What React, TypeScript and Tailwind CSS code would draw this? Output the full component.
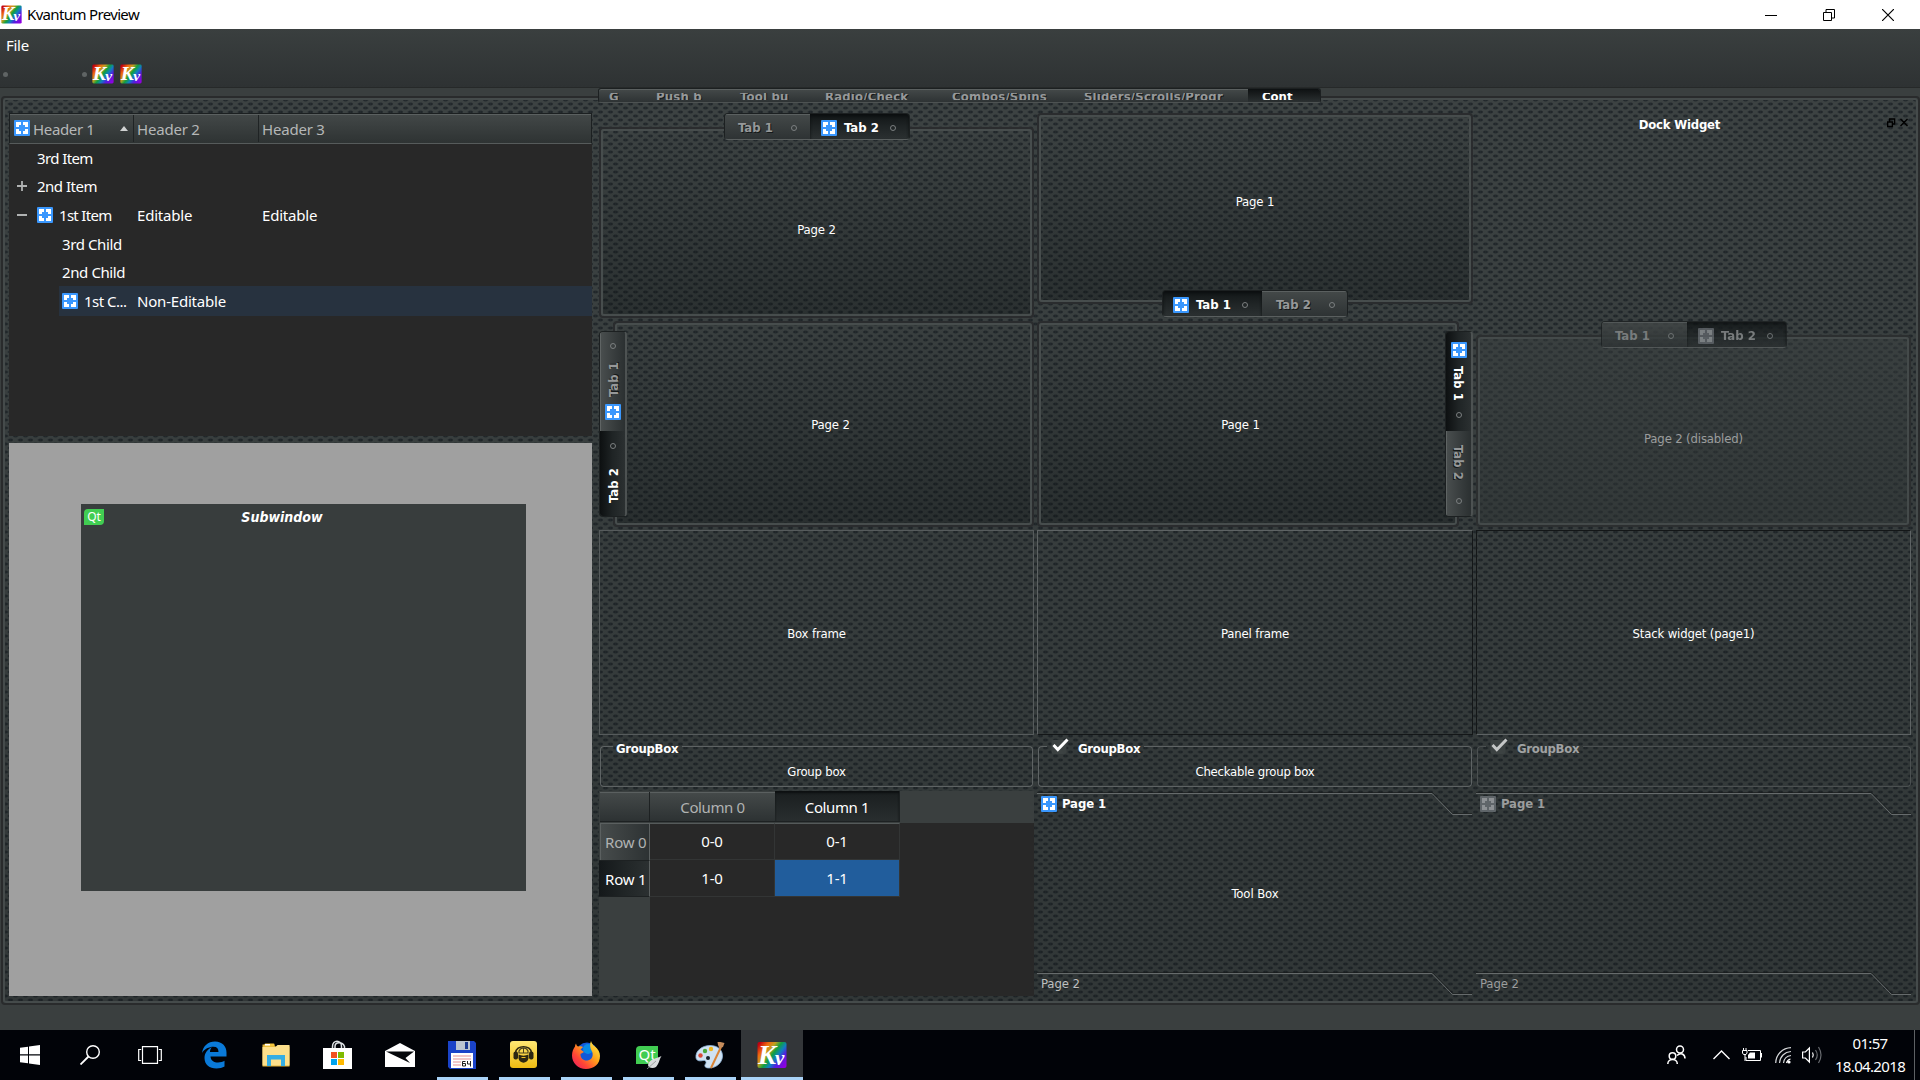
import React from "react";

const WEAVE =
  "bg-[radial-gradient(ellipse_3.4px_1.9px_at_2.5px_2px,#20262880_0,#20262a_45%,transparent_100%),radial-gradient(ellipse_3.4px_1.9px_at_7.5px_6px,#20262880_0,#20262a_45%,transparent_100%)] bg-[size:10px_8px]";

const SEGOE = "font-['Noto_Sans',sans-serif]";
const TAHOMA = "font-['DejaVu_Sans_Condensed','DejaVu_Sans',sans-serif]";

function KvLogo({ size, id }: { size: number; id: string }) {
  return (
    <svg width={size} height={size} viewBox="0 0 30 30" className="shrink-0">
      <defs>
        <linearGradient id={id} x1="0" y1="0.15" x2="1" y2="0.85">
          <stop offset="0" stopColor="#c00010" />
          <stop offset="0.2" stopColor="#f06a10" />
          <stop offset="0.36" stopColor="#c0a020" />
          <stop offset="0.5" stopColor="#10a040" />
          <stop offset="0.64" stopColor="#1080c0" />
          <stop offset="0.78" stopColor="#5020e0" />
          <stop offset="1" stopColor="#9000e0" />
        </linearGradient>
      </defs>
      <rect x="0.5" y="2" width="29" height="26" rx="2" fill={`url(#${id})`} />
      <text x="1" y="23.5" fontFamily="Liberation Serif, serif" fontStyle="italic" fontWeight="bold" fontSize="27" fill="#fff">
        K
      </text>
      <text x="18" y="24.5" fontFamily="Liberation Serif, serif" fontStyle="italic" fontWeight="bold" fontSize="21" fill="#fff">
        v
      </text>
    </svg>
  );
}

function FullIcon({ muted = false }: { muted?: boolean }) {
  return (
    <svg width="16" height="16" viewBox="0 0 16 16" className="shrink-0">
      <rect width="16" height="16" rx="1" fill={muted ? "#5f6569" : "#3a97fd"} />
      <path
        d="M2 2h5v3H5v2H2zM14 2v5h-3V5H9V2zM2 14V9h3v2h2v3zM14 14H9v-3h2V9h3z"
        fill={muted ? "#8d9194" : "#fff"}
      />
    </svg>
  );
}

function Ring() {
  return <span className="size-[6px] shrink-0 rounded-full border-[1.5px] border-[#7b7f80]" />;
}

function Frame({ className = "", children, dim = false }: { className?: string; children?: React.ReactNode; dim?: boolean }) {
  return (
    <div className={`rounded-[4px] border-2 ${dim ? "border-[#2c2f30]" : "border-[#2a2c2e]"} ${className}`}>
      <div
        className={`flex h-full items-center justify-center rounded-[3px] border-2 tracking-[-0.15px] ${
          dim
            ? "border-[#444a4a] bg-linear-to-b from-[#3a404070] to-[#2e343480] text-[#9b9d9d]"
            : "border-[#474d4d] bg-linear-to-b from-transparent to-[#0a0f1050] text-white"
        }`}
      >
        {children}
      </div>
    </div>
  );
}

function HTab({ label, active, icon, muted, className }: { label: string; active?: boolean; icon?: boolean; muted?: boolean; className: string }) {
  const face = active
    ? "bg-linear-to-b from-[#111516] via-[#1f2425] to-[#2b3031] shadow-[inset_0_2px_3px_#0c0f10]"
    : "bg-linear-to-b from-[#444949] to-[#2e3334] shadow-[inset_0_1px_0_#5b6060]";
  const ink = muted ? "text-[#8a8d8e]" : active ? "text-white" : "text-[#969899] [text-shadow:1px_1px_0_#15191a]";
  return (
    <div className={`flex items-center pt-[2px] text-[13px] font-bold ${face} ${ink} ${className}`}>
      {icon && (
        <span className="mr-[7px] flex">
          <FullIcon muted={muted} />
        </span>
      )}
      <span className="mr-[18px] w-[35px] whitespace-nowrap">{label}</span>
      <Ring />
    </div>
  );
}

function HTabs({ first, muted, className = "" }: { first: boolean; muted?: boolean; className?: string }) {
  return (
    <div
      className={`relative z-10 flex h-[27px] w-[186px] overflow-hidden rounded-[4px] border border-[#1c2021] border-b-[#5a5f5f] ${muted ? "opacity-80" : ""} ${className}`}
    >
      <HTab label="Tab 1" active={first} icon={first} muted={muted} className={first ? "w-[99px] pl-[10px] [&>span]:mr-[7px]! [&>span:nth-child(2)]:mr-[11px]!" : "w-[85px] pl-[13px]"} />
      <HTab label="Tab 2" active={!first} icon={!first} muted={muted} className={first ? "flex-1 pl-[14px]" : "flex-1 pl-[11px] [&>span]:mr-[7px]! [&>span:nth-child(2)]:mr-[11px]!"} />
    </div>
  );
}

function VTab({ label, active }: { label: string; active?: boolean }) {
  return (
    <span
      className={`text-[13px] leading-[16px] font-bold whitespace-nowrap [writing-mode:vertical-rl] ${
        active ? "text-white" : "text-[#969899] [text-shadow:1px_1px_0_#15191a]"
      }`}
    >
      {label}
    </span>
  );
}

const vActive = "bg-linear-to-r from-[#0d1011] via-[#1f2425] to-[#2b3031]";
const vIdle = "bg-linear-to-r from-[#4a4f4f] to-[#2b3031] shadow-[inset_1px_0_0_#5f6464]";
const vStrip =
  "relative z-10 flex h-[186px] w-[28px] flex-col overflow-hidden rounded-[4px] border border-[#1c2021] border-r-2 border-r-[#4d5252]";

const outerTabs: [string, number][] = [
  ["G", 47],
  ["Push b", 84],
  ["Tool bu", 85],
  ["Radio/Check", 127],
  ["Combos/Spins", 132],
  ["Sliders/Scrolls/Progr", 164],
];

function Check({ muted }: { muted?: boolean }) {
  return (
    <svg width="18" height="18" viewBox="0 0 18 18" className="shrink-0">
      <rect x="0.5" y="3" width="15" height="14" rx="2" fill="#3c4242" />
      <path d="M2.5 8l4.3 4.500L16.500 2.500" fill="none" stroke={muted ? "#c5c7c7" : "#fff"} strokeWidth="3" />
    </svg>
  );
}

function Group({ title, label, check, muted }: { title: string; label?: string; check?: boolean; muted?: boolean }) {
  const line = muted ? "border-[#4b5051]" : "border-[#5e6364]";
  return (
    <div className={`px-px pt-[2px] pb-px ${muted ? "text-[#a0a2a2]" : "text-white"}`}>
      <div className="flex h-[15px] items-start text-[13px] leading-[15px] font-bold">
        <div className={`mt-[6px] h-[9px] rounded-tl-[4px] border-t border-l ${line} ${check ? "w-[9px]" : "w-[13px]"}`} />
        {check && (
          <span className="mt-[-3px] ml-[4px] flex">
            <Check muted={muted} />
          </span>
        )}
        <span className={`w-[62px] pt-px tracking-[-0.3px] whitespace-nowrap ${check ? "ml-[9px]" : "ml-[3px]"}`}>{title}</span>
        <div className={`mt-[6px] ml-[4px] h-[9px] flex-1 rounded-tr-[4px] border-t border-r ${line}`} />
      </div>
      <div
        className={`flex h-[32px] items-start justify-center rounded-b-[4px] border border-t-0 pt-[9px] text-[13px] leading-[16px] tracking-[-0.22px] ${line}`}
      >
        {label}
      </div>
    </div>
  );
}

function Notch() {
  return (
    <svg width="435" height="23" viewBox="0 0 435 23" className="absolute inset-x-0 top-0">
      <path d="M0 .5H395.500L416 21.500H435" fill="none" stroke="#171a1b" strokeOpacity=".6" strokeWidth="1" />
      <path d="M0 1.500H395L415.500 22.500H435" fill="none" stroke="#666b6c" strokeWidth="1" />
    </svg>
  );
}

function ToolBox({ muted, label }: { muted?: boolean; label?: string }) {
  return (
    <div className={`flex flex-col text-[13px] tracking-[-0.1px] ${muted ? "text-[#9b9d9d]" : "text-white"}`}>
      <div className="relative mt-[1px] flex h-[24px] items-center pl-[4px] font-bold">
        <Notch />
        <span className="mb-px flex"><FullIcon muted={muted} /></span>
        <span className="ml-[5px]">Page 1</span>
      </div>
      <div className="flex h-[156px] items-center justify-center">{label}</div>
      <div className={`relative flex h-[23px] items-center pt-px pl-[4px] ${muted ? "" : "text-[#bdbfbf]"}`}>
        <Notch />
        Page 2
      </div>
    </div>
  );
}

function TreeRow({ children, className = "" }: { children: React.ReactNode; className?: string }) {
  return <div className={`flex items-center ${className}`}>{children}</div>;
}

function Tree() {
  return (
    <div className="h-[323px] bg-[#282828] text-[15px] tracking-[-0.2px] text-white">
      <div className="flex h-[31px] items-center border border-t-[#1c2021] border-r-[#1c2021] border-b-[#565b5b] border-l-[#1c2021] bg-linear-to-b from-[#434848] to-[#2e3333] text-[#b5b7b7] shadow-[inset_0_1px_0_#5b6060]">
        <div className="flex h-[27px] w-[124px] items-center border-r border-[#1f2324] pl-[4px]">
          <span className="mb-px flex"><FullIcon /></span>
          <span className="ml-[3px] w-[87px] pt-[2px] tracking-[-0.35px]">Header 1</span>
          <span className="border-x-[4px] border-b-[5px] border-x-transparent border-b-[#d0d2d2]" />
        </div>
        <div className="flex h-[27px] w-[125px] items-center border-r border-[#1f2324] pt-[2px] pl-[3px]">Header 2</div>
        <div className="pt-[2px] pl-[3px]">Header 3</div>
      </div>
      <TreeRow className="h-[28px] pl-[28px] tracking-[-0.6px]">3rd Item</TreeRow>
      <TreeRow className="h-[28px] pl-[8px] tracking-[-0.5px]">
        <svg width="10" height="10" className="mr-[10px]"><path d="M0 5h10M5 0v10" stroke="#b0b2b2" strokeWidth="1.800" /></svg>
        2nd Item
      </TreeRow>
      <TreeRow className="h-[30px] pl-[8px]">
        <svg width="10" height="10" className="mr-[10px]"><path d="M0 5h10" stroke="#b0b2b2" strokeWidth="2" /></svg>
        <FullIcon />
        <span className="ml-[6px] w-[78px] tracking-[-0.7px]">1st Item</span>
        <span className="w-[125px]">Editable</span>
        <span>Editable</span>
      </TreeRow>
      <TreeRow className="h-[28px] pl-[53px] tracking-[-0.4px]">3rd Child</TreeRow>
      <TreeRow className="h-[28px] pl-[53px] tracking-[-0.4px]">2nd Child</TreeRow>
      <TreeRow className="ml-[50px] h-[30px] bg-[#27323f] pl-[3px]">
        <FullIcon />
        <span className="ml-[6px] w-[53px] tracking-[-0.5px]">1st C...</span>
        <span>Non-Editable</span>
      </TreeRow>
    </div>
  );
}

function QtBadge({ className = "" }: { className?: string }) {
  return (
    <span className={`flex h-[16px] w-[20px] items-center justify-center rounded-tl-[4px] rounded-br-[4px] bg-[#41cd52] text-[12px] leading-none text-white ${className}`}>
      Qt
    </span>
  );
}

function Table() {
  const headIdle = "bg-linear-to-b from-[#454a4a] to-[#2d3233] shadow-[inset_0_1px_0_#5b6060] border-[#1d2122]";
  return (
    <div className="grid grid-cols-[51px_125px_125px_1fr] grid-rows-[32px_37px_37px_1fr] bg-[#3a3f3f] text-[15px] tracking-[-0.2px] text-white">
      <div className={`mt-[1px] mb-[1px] ml-[1px] border-r border-b ${headIdle}`} />
      <div className={`mt-[1px] mb-[1px] flex items-center justify-center border-b pt-[2px] tracking-[-0.4px] text-[#b0b2b2] ${headIdle}`}>Column 0</div>
      <div className="mt-0 mb-[1px] flex items-center justify-center border-r border-b border-[#1d2122] bg-linear-to-b from-[#1a1e1f] to-[#292e2f] pt-[3px] tracking-[-0.4px] shadow-[inset_0_2px_2px_#0d1011]">Column 1</div>
      <div />
      <div className="ml-[1px] flex items-center border-r border-[#5b6060] bg-linear-to-r from-[#474c4c] to-[#2d3233] pt-[1px] pl-[5px] whitespace-nowrap text-[#b0b2b2] shadow-[inset_1px_1px_0_#5b6060]">Row 0</div>
      <div className="flex items-center justify-center border-r border-b border-[#333535] border-t border-t-[#555a5a] bg-[#282828]">0-0</div>
      <div className="flex items-center justify-center border-r border-b border-[#333535] border-t border-t-[#555a5a] bg-[#282828]">0-1</div>
      <div className="bg-[#282828]" />
      <div className="flex items-center border-t border-r border-b border-t-[#1d2122] border-r-[#5b6060] border-b-[#1d2122] bg-linear-to-r from-[#14181a] via-[#202526] to-[#2b3031] pt-[1px] pl-[6px] whitespace-nowrap">Row 1</div>
      <div className="flex items-center justify-center border-r border-b border-[#333535] bg-[#282828]">1-0</div>
      <div className="flex items-center justify-center border-r border-b border-[#333535] bg-[#215d9c]">1-1</div>
      <div className="bg-[#282828]" />
      <div />
      <div className="col-span-3 bg-[#282828]" />
    </div>
  );
}

function Slot({ children, open, active }: { children: React.ReactNode; open?: boolean; active?: boolean }) {
  return (
    <div className={`flex h-full w-[62px] flex-col items-center ${active ? "bg-[#333639]" : ""}`}>
      <div className="flex flex-1 items-center pt-[2px]">{children}</div>
      <div className={`h-[3px] ${active ? "w-full" : "w-[51px]"} ${open ? "bg-[#a9d3f7]" : ""}`} />
    </div>
  );
}

function Taskbar() {
  return (
    <div className="flex h-[50px] items-center bg-[#010308] text-white">
      <div className="flex w-[60px] justify-center">
        <svg width="20" height="20" viewBox="0 0 20 20" fill="#fff"><path d="M0 2.800L8 1.700V9.300H0zM9 1.500L20 0V9.300H9zM0 10.500H8V18.300L0 17.200zM9 10.500H20V20L9 18.500z" /></svg>
      </div>
      <div className="flex w-[60px] justify-center">
        <svg width="20" height="20" viewBox="0 0 20 20" fill="none" stroke="#fff" strokeWidth="1.400"><circle cx="13" cy="7" r="6.300" /><path d="M8.500 11.500L.5 19.500" strokeWidth="1.800" /></svg>
      </div>
      <div className="flex w-[60px] justify-center">
        <svg width="24" height="18" viewBox="0 0 24 18" fill="none" stroke="#fff" strokeWidth="1.200"><path d="M4.500.6h15v16.800h-15zM3.200 3.500H.7v11h2.500M20.800 3.500h2.500v11h-2.500" /></svg>
      </div>
      <div className="ml-[3px] flex h-full">
        <Slot>
          <svg width="26" height="28" viewBox="0 0 26 28">
            <path d="M1 12C2 5 7 0.500 14 0.500c7.500 0 11.500 5 11.500 11v4H9.500c.3 4 3.500 6 7.500 6 2.500 0 4.800-.7 6.500-1.700v5.700c-2 1.300-5 2-8 2C8.500 27.500 3.500 23.500 3.500 17c0-5 3-8.800 7.500-10.800C9.500 7.500 9 9.500 9 11h8.500c0-3.500-1.700-5.200-5-5.200C8 5.800 3.500 8 1 12z" fill="#0a7ad8" />
          </svg>
        </Slot>
        <Slot>
          <svg width="28" height="26" viewBox="0 0 28 26">
            <path d="M.5 2.500h11l2 2H27.500v20H.5z" fill="#e3b63a" /><path d="M.5 5h13l2-2h12v20.500H.5z" fill="#fde08c" /><rect x="2.500" y="1.500" width="10" height="3" rx="1" fill="#f4c63d" /><rect x="3" y="2" width="5" height="1.500" fill="#fff" />
            <path d="M5 13h18v11h-4v-6.500H9V24H5z" fill="#35aee4" />
          </svg>
        </Slot>
        <Slot>
          <svg width="29" height="29" viewBox="0 0 29 29" className="mr-[2px]">
            <path d="M9.500 9V6.500c0-7 9-7 9 0V9M12 9V6.500c0-5 7.500-5 9.500 0V9" fill="none" stroke="#dfe3e6" strokeWidth="1.500" /><path d="M0 8h29v21H0z" fill="#fff" />
            <path d="M8 12h6v6H8z" fill="#f25022" /><path d="M15 12h6v6h-6z" fill="#7fba00" /><path d="M8 19h6v6H8z" fill="#00a4ef" /><path d="M15 19h6v6h-6z" fill="#ffb900" />
          </svg>
        </Slot>
        <Slot>
          <svg width="30" height="24" viewBox="0 0 30 24"><path d="M0 8L15 0l15 8v16H0z" fill="#fff" /><path d="M1 8.500h28l-8.500 6.500 4.500 5L1 8.500z" fill="#05070b" /></svg>
        </Slot>
        <Slot open>
          <svg width="28" height="28" viewBox="0 0 28 28">
            <path d="M0 0h26l2 2v26H2l-2-2z" fill="#1a43c8" /><rect x="8" y="0" width="14" height="9" fill="#b9c4d0" /><rect x="17" y="1" width="3" height="7" fill="#1a3a90" /><rect x="3" y="12" width="22" height="15" fill="#fff" />
            <path d="M5 15h18M5 18h18M5 21h8M5 24h8" stroke="#f0b5b8" strokeWidth="1.500" /><path d="M17.500 20.500h-3v4.500h3v-2.500h-3M19.500 20v3h3M22.500 20v5.500" fill="none" stroke="#222" strokeWidth="1" />
          </svg>
        </Slot>
        <Slot open>
          <svg width="27" height="27" viewBox="0 0 27 27" className="mr-[1px]">
            <defs><linearGradient id="hp" x1="0" y1="0" x2="0" y2="1"><stop offset="0" stopColor="#ffe874" /><stop offset="1" stopColor="#eebb12" /></linearGradient></defs>
            <rect width="27" height="27" rx="3" fill="url(#hp)" />
            <path d="M5.500 12C6 3.500 21 3.500 21.500 12" fill="none" stroke="#2c2712" strokeWidth="1.500" />
            <path d="M9 10c1.500-4 7.500-4 9 0v2H9z" fill="none" stroke="#4a421f" strokeWidth="1.200" /><path d="M13.500 7v5" stroke="#4a421f" />
            <rect x="3.500" y="10.500" width="4.500" height="8" rx="2" fill="#2c2712" /><rect x="19" y="10.500" width="4.500" height="8" rx="2" fill="#2c2712" />
            <path d="M8.500 13.500c3 1.500 7 1.500 10 0v4c-1 5.500-9 5.500-10 0z" fill="#2c2712" /><path d="M11.500 16.500h4" stroke="#f0c020" strokeWidth="1" />
          </svg>
        </Slot>
        <Slot open>
          <svg width="28" height="28" viewBox="0 0 28 28">
            <defs><linearGradient id="ff" x1="1" y1="0" x2="0" y2="1"><stop offset="0.050" stopColor="#fff14a" /><stop offset="0.400" stopColor="#ffa51a" /><stop offset="0.700" stopColor="#ff4436" /><stop offset="1" stopColor="#e4166a" /></linearGradient></defs>
            <circle cx="15" cy="12" r="10.500" fill="#1358d8" /><circle cx="16" cy="8" r="5" fill="#00b8f0" opacity=".55" />
            <path d="M19 0c1 3 2 4 4 5.500C26 8 28 11 28 15c0 8-6 13-14 13S0 22 0 14.500c0-4 1.500-7 3-9 0-1 .3-2 1-3 .3 1.500 1 2.500 2 3 2-.6 4-.2 5 .6L8.500 8.500 12 11l-3.500 2c-.3 4 3 7 7 6.500 5-.5 6.500-6 4-10C18 7 17.500 3 19 0z" fill="url(#ff)" />
          </svg>
        </Slot>
        <Slot open>
          <div className="relative mr-[2px] flex">
            <QtBadge className="h-[18px]! w-[22px]! text-[15px]!" />
            <svg width="15" height="13" viewBox="0 0 15 13" className="absolute top-[10px] left-[11px]"><path d="M14.500 0C9 3 2 3 1 9c0 3 5 4 8 2 3-3 3-7 5.500-11z" fill="#d9dcdd" /><path d="M0 13L9 5" stroke="#8c9193" strokeWidth=".8" /></svg>
          </div>
        </Slot>
        <Slot open>
          <svg width="30" height="28" viewBox="0 0 30 28">
            <path d="M1 17C0 10 7 4.500 15 4.500S27.500 9 27.500 15 22 27 14 27c-4 0-5-2-3.500-4s0-4-2.500-3.500-6 1-7-2.500z" fill="#cfe2f3" stroke="#8db3d6" strokeWidth=".8" />
            <circle cx="5.500" cy="14.500" r="2.200" fill="#d94a38" /><circle cx="10" cy="10" r="2.200" fill="#4aa83c" /><circle cx="16" cy="8" r="2.200" fill="#f0b51c" /><circle cx="13" cy="17" r="2" fill="#16202c" />
            <path d="M26 6L16 27" stroke="#d98436" strokeWidth="2" /><path d="M22.500 1l3 0L29.500 2l-1.500 4-3.500 1.500L23 4z" fill="#c58c5c" />
          </svg>
        </Slot>
        <Slot open active>
          <KvLogo size={30} id="kvTask" />
        </Slot>
      </div>
      <div className="ml-auto flex h-full items-center">
        <svg width="19" height="20" viewBox="0 0 19 20" className="mr-[27px]" fill="none" stroke="#fff" strokeWidth="1.500"><circle cx="13" cy="4.500" r="3.500" /><circle cx="5.500" cy="11" r="3.300" /><path d="M.8 19c0-6 9.500-6 9.500 0M10 10.500c3.500-3.500 8-1.500 8 3" /></svg>
        <svg width="17" height="10" viewBox="0 0 17 10" className="mr-[12px]" fill="none" stroke="#fff" strokeWidth="1.400"><path d="M.5 9L8.500 1l8 8" /></svg>
        <svg width="20" height="14" viewBox="0 0 20 14" className="mr-[13px]" fill="none" stroke="#fff"><path d="M6 2.500h12.500v10H4V9" /><path d="M19.500 5v4.500" /><path d="M8 4.500h5v6H6V7z" fill="#fff" stroke="none" /><path d="M1.500 0v2M4 0v2" /><path d="M.5 2.500h4.500v2.500l-1 1.500H1.500l-1-1.500zM3 6.500V13" /></svg>
        <svg width="17" height="17" viewBox="0 0 17 17" className="mr-[10px]" fill="none" stroke="#d4d6d8" strokeWidth="1.200"><path d="M.7 16C1 7.500 7.500 1 16 .7M4.500 16C5 9.500 9.500 5 16 4.500M8.500 16c.5-4.500 3-7 7.500-7.500" /><path d="M11.500 16c.5-2 1.500-3.500 4-4" stroke="#fff" /><circle cx="14" cy="15" r="1.600" fill="#fff" stroke="none" /></svg>
        <svg width="21" height="18" viewBox="0 0 21 18" className="mr-[11px]" fill="none" stroke="#fff" strokeWidth="1.200"><path d="M.6 6h2.800l4-4v14l-4-4H.6z" /><path d="M10.500 6.500q1.500 2.500 0 5" /><path d="M13.500 4q3.500 5 0 10M16.500 1q5 8 0 16" stroke="#686b6f" /></svg>
        <div className="flex w-[72px] flex-col items-center text-[15px] leading-[23px] tracking-[-0.65px] whitespace-nowrap">
          <span>01:57</span>
          <span>18.04.2018</span>
        </div>
        <div className="ml-[8px] h-full w-px bg-[#5d6063]" />
        <div className="w-[5px]" />
      </div>
    </div>
  );
}

export default function App() {
  return (
    <div className={`flex h-[1080px] w-[1920px] flex-col overflow-hidden bg-[#3a3f3f] ${SEGOE}`}>
      <header className="flex h-[29px] shrink-0 items-center bg-white pl-[1px] text-[15px] text-black">
        <KvLogo size={21} id="kvTitle" />
        <span className="ml-[5px] tracking-[-0.65px]">Kvantum Preview</span>
        <div className="ml-auto flex items-center">
          <svg width="12" height="12" className="mr-[46px]"><path d="M0 6.500h12" stroke="#000" /></svg>
          <svg width="12" height="12" className="mr-[47px]" fill="none" stroke="#000"><path d="M.5 3.500h8v8h-8zM3 3V.5h8.500V9H9" /></svg>
          <svg width="12" height="12" className="mr-[26px]" stroke="#000" strokeWidth="1.200"><path d="M0 0L12 12M12 0L0 12" /></svg>
        </div>
      </header>

      <div className="flex h-[59px] shrink-0 flex-col border-b border-[#262929] bg-linear-to-b from-[#3a3f3f] to-[#2e3233] text-[15px] text-white">
        <div className="flex h-[33px] items-center pl-[6px] tracking-[-0.3px]">File</div>
        <div className="flex h-[24px] items-center pl-[3px]">
          <span className="size-[5px] rounded-full bg-[#5f6464]" />
          <span className="ml-[74px] size-[5px] rounded-full bg-[#5f6464]" />
          <span className="ml-[5px] flex gap-[6px]">
            <KvLogo size={22} id="kvBarA" />
            <KvLogo size={22} id="kvBarB" />
          </span>
        </div>
      </div>

      <div className={`mt-[8px] ml-[1px] h-[909px] shrink-0 rounded-[4px] border-2 border-[#292b2c] bg-[#3c4242] ${WEAVE}`}>
        <div className="h-full rounded-[3px] bg-linear-to-b from-transparent to-[#0a0f1038] shadow-[inset_0_0_0_2px_#454b4b]">
          <div className={`absolute top-[88px] left-[598px] z-10 flex h-[15px] w-[723px] overflow-hidden rounded-[3px] border border-[#1c2021] border-b-[#4d5252] bg-linear-to-b from-[#444949] to-[#2e3334] text-[13px] font-bold text-[#969899] shadow-[inset_0_1px_0_#5b6060] ${TAHOMA}`}>
            <div className="mt-[4px] flex h-[7px] w-[649px] items-center overflow-hidden pl-[10px] tracking-[0.2px] [text-shadow:1px_1px_0_#15191a]">
              {outerTabs.map(([label, w]) => (
                <span key={label} className="shrink-0 leading-[7px] whitespace-nowrap" style={{ width: w }}>
                  {label}
                </span>
              ))}
            </div>
            <div className="flex flex-1 bg-linear-to-b from-[#0e1112] to-[#2b3031] pt-[4px] pl-[14px] text-white">
              <span className="h-[7px] overflow-hidden leading-[7px]">Cont</span>
            </div>
          </div>

          <div className="flex pt-[15px] pl-[6px]">
            <div className="mr-[7px] flex w-[583px] flex-col">
              <Tree />
              <div className="mt-[7px] flex h-[553px] bg-[#a0a0a0]">
                <div className="mt-[61px] ml-[72px] h-[387px] w-[445px] bg-[#383d3d]">
                  <div className="flex h-[25px] items-center pl-[3px]">
                    <QtBadge />
                    <span className={`flex-1 pt-px pr-[66px] text-center text-[14px] font-bold text-white italic ${TAHOMA}`}>Subwindow</span>
                  </div>
                </div>
              </div>
            </div>

            <div className={`grid grid-cols-[435px_436px_436px] grid-rows-[205px_206px_205px_50px_205px] gap-[3px] text-[13px] ${TAHOMA}`}>
              <div className="flex flex-col">
                <HTabs first={false} className="ml-[125px]" />
                <Frame className="mt-[-13px] flex-1"><span className="mt-[14px]">Page 2</span></Frame>
              </div>
              <div className="flex flex-col">
                <Frame className="h-[191px]"><span className="mb-[14px]">Page 1</span></Frame>
                <HTabs first className="mt-[-14px] ml-[125px]" />
              </div>
              <div className="flex items-start text-white">
                <div className="w-[407px] pt-[2px] text-center font-bold tracking-[-0.2px]">Dock Widget</div>
                <svg width="22" height="10" viewBox="0 0 22 10" className="mt-[5px] ml-[4px]" fill="none" stroke="#000" strokeWidth="1.400"><path d="M.6 4h4.800v4.500H.6zM2.600 3.500V1h5v5H6M13.500 1l7 7M20.500 1l-7 7" /></svg>
              </div>

              <div className="flex">
                <div className={`mt-[10px] ${vStrip}`}>
                  <div className={`flex h-[99px] flex-col items-center pt-[11px] ${vIdle}`}>
                    <Ring />
                    <span className="mt-[12px] ml-[2px] flex h-[38px] rotate-180 items-center"><VTab label="Tab 1" /></span>
                    <span className="mt-[5px] ml-px"><FullIcon /></span>
                  </div>
                  <div className={`flex flex-1 flex-col items-center pt-[12px] ${vActive}`}>
                    <Ring />
                    <span className="mt-[18px] ml-[2px] flex h-[38px] rotate-180 items-center"><VTab label="Tab 2" active /></span>
                  </div>
                </div>
                <Frame className="ml-[-14px] flex-1"><span className="mt-px ml-[14px]">Page 2</span></Frame>
              </div>
              <div className="flex">
                <Frame className="w-[422px]"><span className="mt-px mr-[15px]">Page 1</span></Frame>
                <div className={`mt-[10px] ml-[-14px] ${vStrip}`}>
                  <div className={`flex h-[99px] flex-col items-center pt-[10px] ${vActive}`}>
                    <FullIcon />
                    <span className="mt-[8px] mr-[2px] flex h-[36px]"><VTab label="Tab 1" active /></span>
                    <span className="mt-[10px] flex"><Ring /></span>
                  </div>
                  <div className={`flex flex-1 flex-col items-center pt-[14px] ${vIdle}`}>
                    <span className="mr-[2px] flex h-[36px]"><VTab label="Tab 2" /></span>
                    <span className="mt-[17px] flex"><Ring /></span>
                  </div>
                </div>
              </div>
              <div className="flex flex-col">
                <HTabs first={false} muted className="ml-[125px]" />
                <Frame dim className="mt-[-13px] mr-px flex-1"><span className="mt-[15px]">Page 2 (disabled)</span></Frame>
              </div>

              <div className="flex items-center justify-center border border-[#565b5c] pt-[2px] tracking-[-0.15px] text-white">Box frame</div>
              <div className="flex items-center justify-center border border-t-[#5e6364] border-r-[#141718] border-b-[#141718] border-l-[#5e6364] pt-[2px] tracking-[-0.15px] text-white">Panel frame</div>
              <div className="mr-px flex items-center justify-center border border-t-[#141718] border-r-[#5e6364] border-b-[#5e6364] border-l-[#141718] pt-[2px] tracking-[-0.15px] text-white">Stack widget (page1)</div>

              <Group title="GroupBox" label="Group box" />
              <Group title="GroupBox" label="Checkable group box" check />
              <Group title="GroupBox" check muted />

              <div className={`grid ${SEGOE}`}><Table /></div>
              <ToolBox label="Tool Box" />
              <ToolBox muted />
            </div>
          </div>
        </div>
      </div>

      <div className="mt-auto shrink-0">
        <Taskbar />
      </div>
    </div>
  );
}
